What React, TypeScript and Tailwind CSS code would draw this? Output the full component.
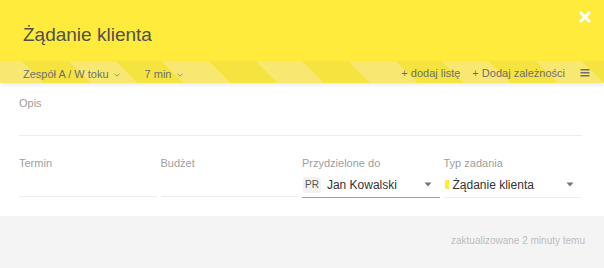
import React from "react";

const Chevron = () => (
  <svg width="6" height="4" viewBox="0 0 6 4" className="ml-[5px] mt-[1px]" fill="none">
    <path d="M0.5 0.7 L3 3.2 L5.5 0.7" stroke="#8a8a7a" strokeWidth="0.9" />
  </svg>
);

const Caret = () => (
  <svg width="8" height="5" viewBox="0 0 8 5">
    <path d="M0.5 0.5 L7.5 0.5 L4 4.5 Z" fill="#757575" />
  </svg>
);

export default function App() {
  return (
    <div
      className="w-[604px] h-[268px] overflow-hidden bg-white flex flex-col"
      style={{ fontFamily: "'Liberation Sans', Arial, sans-serif" }}
    >
      {/* header */}
      <div className="h-[61px] bg-[#ffeb3b] flex justify-between shrink-0">
        <div className="pl-[23px] pt-[23px] text-[19px] leading-[24px] text-[#505050]">
          Żądanie klienta
        </div>
        <div className="pt-[10px] pr-[12px]">
          <svg width="14" height="14" viewBox="0 0 14 14">
            <path d="M2 2 L12 12 M12 2 L2 12" stroke="#ffffff" strokeWidth="3" />
          </svg>
        </div>
      </div>
      {/* stripe bar */}
      <div className="relative z-10 h-[22px] shrink-0 flex justify-between pl-[23px] pr-[14px] pt-[5px] text-[11px] leading-[15px] text-[#6e6e6e] bg-[repeating-linear-gradient(45deg,#f8e872_0px,#f8e872_31px,#f5e340_31px,#f5e340_64px,#f8e872_64px,#f8e872_66px)] shadow-[0_2px_4px_rgba(0,0,0,0.09)]">
        <div className="flex">
          <div className="flex items-center">
            Zespół A / W toku
            <Chevron />
          </div>
          <div className="flex items-center ml-[25px]">
            7 min
            <Chevron />
          </div>
        </div>
        <div className="flex items-start">
          <div>+ dodaj listę</div>
          <div className="ml-[12px]">+ Dodaj zależności</div>
          <div className="ml-[15px] pt-[3px]">
            <svg width="10" height="8" viewBox="0 0 10 8">
              <path d="M0.5 0.75 H9.5 M0.5 3.75 H9.5 M0.5 6.75 H9.5" stroke="#6e6e6e" strokeWidth="1.5" />
            </svg>
          </div>
        </div>
      </div>
      {/* body */}
      <div className="h-[133px] shrink-0 bg-white px-[19px]">
        <div className="pt-[13px] pr-[3px]">
          <div className="text-[11px] leading-[15px] text-[#9e9e9e]">Opis</div>
          <div className="h-[24px] border-b border-[#ececec] box-content"></div>
        </div>
        <div className="mt-[20px] grid grid-cols-4 gap-[4px] w-[562px]">
          <div>
            <div className="text-[11px] leading-[15px] text-[#9e9e9e]">Termin</div>
            <div className="h-[25px] border-b border-[#ececec] box-content"></div>
          </div>
          <div>
            <div className="text-[11px] leading-[15px] text-[#9e9e9e]">Budżet</div>
            <div className="h-[25px] border-b border-[#ececec] box-content"></div>
          </div>
          <div>
            <div className="text-[11px] leading-[15px] text-[#9e9e9e]">Przydzielone do</div>
            <div className="h-[25px] border-b border-[#9e9e9e] box-content flex items-center pt-[1px] box-border">
              <div className="ml-[1px] h-[16px] px-[2px] bg-[#f2f2f2] rounded-[2px] text-[10px] leading-[16px] text-[#555]">
                PR
              </div>
              <div className="ml-[6px] text-[12px] leading-[16px] text-[#333]">Jan Kowalski</div>
              <div className="ml-auto mr-[8px]">
                <Caret />
              </div>
            </div>
          </div>
          <div>
            <div className="text-[11px] leading-[15px] text-[#9e9e9e]">Typ zadania</div>
            <div className="h-[25px] border-b border-[#ececec] box-content flex items-center pt-[1px] box-border">
              <div className="ml-[1px] w-[4px] h-[9px] bg-[#ffeb3b]"></div>
              <div className="ml-[4px] text-[12px] leading-[16px] text-[#333]">Żądanie klienta</div>
              <div className="ml-auto mr-[7px]">
                <Caret />
              </div>
            </div>
          </div>
        </div>
      </div>
      {/* footer */}
      <div className="flex-1 bg-[#f4f4f4] flex justify-end pr-[19px] pt-[18px]">
        <div className="text-[10px] leading-[13px] text-[#bdbdbd]">zaktualizowane 2 minuty temu</div>
      </div>
    </div>
  );
}
